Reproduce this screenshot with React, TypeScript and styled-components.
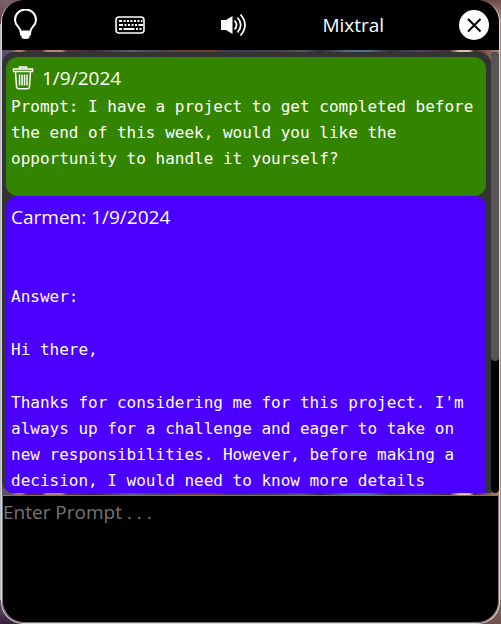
import React from "react";
import styled, { createGlobalStyle } from "styled-components";

const GlobalStyle = createGlobalStyle`
  *, *::before, *::after { box-sizing: border-box; }
  html, body, #root { height: 100%; margin: 0; }
  body {
    font-family: "Open Sans", "Noto Sans", sans-serif;
    font-size: 19px;
    line-height: 26px;
    color: #fff;
    background: linear-gradient(90deg, #b9b6bd 0 50%, #b08c82 50%);
  }
`;

const Frame = styled.main`
  height: 100vh;
  padding: 0 1px;
  background:
    linear-gradient(#6a5068, #3a2038) left bottom / 24px 24px no-repeat,
    linear-gradient(#8a6c68, #6c504c) right bottom / 24px 24px no-repeat,
    linear-gradient(#7d6068, #5c4250) left top / 24px 24px no-repeat,
    linear-gradient(#6a4a48, #c09a90) right top / 24px 24px no-repeat;
`;

const Window = styled.div`
  display: flex;
  flex-direction: column;
  height: 100%;
  overflow: hidden;
  border: 1px solid #d8d8d8;
  border-width: 0 1px 1px;
  border-radius: 22px;
  background: linear-gradient(
    90deg,
    #5c5068 0 2%, #a87868 3% 4%, #4c2c34 5% 8%, #b48474 9% 12%, #50303c 13% 16%,
    #3c2634 18%, #5c5c6c 26%, #4c4448 32%, #6c4434 38% 42%, #3c3850 46%,
    #48404c 56%, #585858 60%, #343038 64%, #4c7088 70% 74%, #38343c 78%,
    #4c4468 84%, #482830 90%, #d8c4b0 92% 94%, #4a2828 95%, #b08878 100%
  );
`;

const Toolbar = styled.header`
  display: flex;
  flex: none;
  align-items: center;
  justify-content: space-between;
  height: 50px;
  padding: 0 10px 0 8px;
  background: #000;
`;

const IconButton = styled.button`
  display: flex;
  padding: 0;
  border: 0;
  background: none;
  color: #fff;
  cursor: pointer;
`;

const ModelName = styled.span`
  line-height: 26px;
`;

const Log = styled.section`
  display: flex;
  flex: 1;
  min-height: 0;
  margin: 2px 0;
`;

const Messages = styled.div`
  flex: 1;
  min-width: 0;
  overflow: hidden;
  padding: 5px 5px 0 4px;
  border-radius: 12px 12px 0 12px;
  background: #333;
`;

const Track = styled.div`
  flex: none;
  width: 8px;
  border-radius: 4px;
  background: #000;
`;

const Thumb = styled.div`
  height: 70%;
  border-radius: 4px;
  background: #555;
`;

const Card = styled.article<{ $color: string; $height: number }>`
  min-height: ${(p) => p.$height}px;
  padding: 8px 5px;
  border-radius: 12px;
  background: ${(p) => p.$color};
`;

const CardHead = styled.header`
  display: flex;
  align-items: center;
  gap: 6px;
`;

const Body = styled.div<{ $offset?: number }>`
  display: grid;
  gap: 27px;
  margin-top: ${(p) => p.$offset ?? 0}px;
  font: 16px/26px "DejaVu Sans Mono", monospace;
`;

const Paragraph = styled.p`
  margin: 0;
`;

const Prompt = styled.textarea`
  display: block;
  flex: none;
  width: 100%;
  height: 128px;
  padding: 3px 0;
  border: 1px solid #767676;
  border-radius: 0 0 22px 22px;
  outline: 0;
  resize: none;
  background: #000;
  color: #fff;
  font: inherit;
  &::placeholder { color: #757575; }
`;

const BulbIcon = () => (
  <svg width="30" height="32" viewBox="0 0 30 32" fill="none" stroke="#fff" strokeWidth="2">
    <path d="M10.500 22.500C10.500 18 5 17 5 11a10.500 10.500 0 0 1 21 0c0 6-5.500 7-5.500 11.500z" />
    <path d="M10 23h11v3l-1.500 1v2q-4 2-8 0v-2L10 26z" fill="#fff" stroke="none" />
  </svg>
);

const KeyboardIcon = () => (
  <svg width="30" height="18" viewBox="0 0 30 18" fill="none" stroke="#fff">
    <rect x="1" y="1" width="28" height="16" rx="3" strokeWidth="1.600" />
    <path d="M4 5h3m1.500 0h2m1.500 0h2m1.500 0h2m1.500 0h2m1.500 0h2m1.500 0h1.500M4 9h4m1.500 0h2m1.500 0h2m1.500 0h2m1.500 0h2m1.500 0h4.500M4 13h3m1.500 0h11m1.500 0h2m1.500 0h2" strokeWidth="2" />
  </svg>
);

const SpeakerIcon = () => (
  <svg width="28" height="24" viewBox="0 0 28 24" fill="none" stroke="#fff" strokeWidth="1.700">
    <path d="M1 7h5L12.500 3v18L6 17H1z" fill="#fff" stroke="none" />
    <path d="M14.500 7.500q4 4.500 0 9M17.500 4.500q6.500 7.500 0 15M20.500 1.500q9 10.500 0 21" />
  </svg>
);

const CloseIcon = () => (
  <svg width="30" height="30" viewBox="0 0 30 30">
    <circle cx="15" cy="15" r="15" fill="#fff" />
    <path d="M9 9l12.500 12.500M21.500 9L9 21.500" stroke="#000" strokeWidth="2" />
  </svg>
);

const TrashIcon = () => (
  <svg width="25" height="24" viewBox="0 0 25 24" fill="none" stroke="#fff" strokeWidth="1.500">
    <path d="M2.500 3h19v2.500h-19zM8.500 3V1h7v2M4.500 5.500l1 15q.2 2.200 2.500 2.200h8q2.300 0 2.500-2.200l1-15M8.500 8.500v11M11 8.500v11M13.500 8.500v11M16 8.500v11" />
  </svg>
);

export default function App() {
  return (
    <>
      <GlobalStyle />
      <Frame>
        <Window>
          <Toolbar>
            <IconButton aria-label="Ideas"><BulbIcon /></IconButton>
            <IconButton aria-label="Keyboard"><KeyboardIcon /></IconButton>
            <IconButton aria-label="Sound"><SpeakerIcon /></IconButton>
            <ModelName>Mixtral</ModelName>
            <IconButton aria-label="Close"><CloseIcon /></IconButton>
          </Toolbar>
          <Log>
            <Messages>
              <Card $color="#338500" $height={139}>
                <CardHead>
                  <IconButton aria-label="Delete message"><TrashIcon /></IconButton>
                  <time>1/9/2024</time>
                </CardHead>
                <Body $offset={3}>
                  <Paragraph>
                    Prompt: I have a project to get completed before the end of this week, would you like
                    the opportunity to handle it yourself?
                  </Paragraph>
                </Body>
              </Card>
              <Card $color="#4b00ff" $height={298}>
                <CardHead>
                  <span>Carmen: <time>1/9/2024</time></span>
                </CardHead>
                <Body $offset={54}>
                  <Paragraph>Answer:</Paragraph>
                  <Paragraph>Hi there,</Paragraph>
                  <Paragraph>
                    Thanks for considering me for this project. I'm always up for a challenge and eager to
                    take on new responsibilities. However, before making a decision, I would need to know
                    more details
                  </Paragraph>
                </Body>
              </Card>
            </Messages>
            <Track><Thumb /></Track>
          </Log>
          <Prompt aria-label="Prompt" placeholder="Enter Prompt . . ." />
        </Window>
      </Frame>
    </>
  );
}
